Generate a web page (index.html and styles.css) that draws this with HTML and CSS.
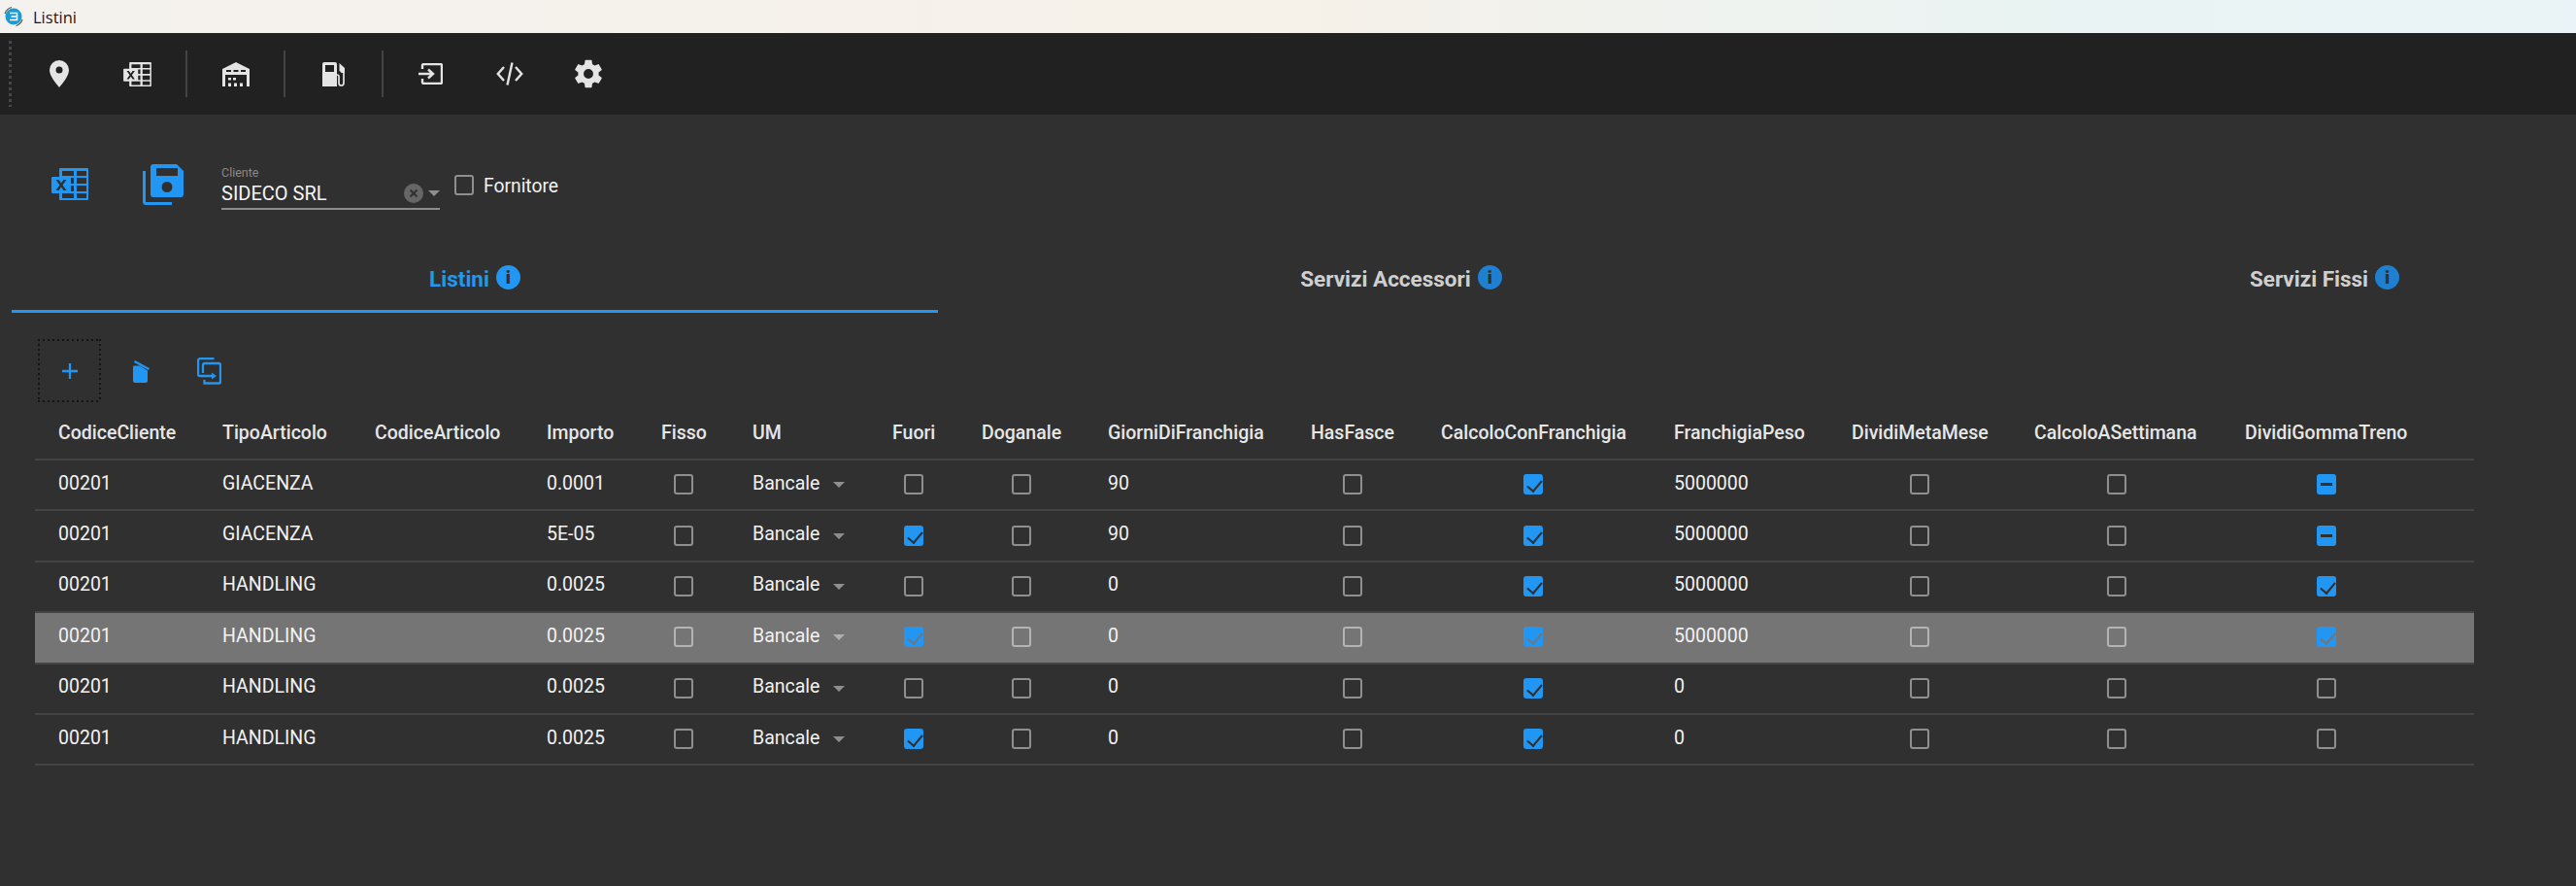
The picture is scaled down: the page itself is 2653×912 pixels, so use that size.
FILE: index.html
```html
<!DOCTYPE html>
<html lang="it">
<head>
<meta charset="utf-8">
<title>Listini</title>
<link rel="stylesheet" href="styles.css">
</head>
<body>
<svg class="defs" width="0" height="0" aria-hidden="true">
  <symbol id="xl" viewBox="0 0 38 33">
    <path fill-rule="evenodd" d="M9 0H37a1 1 0 0 1 1 1V32a1 1 0 0 1-1 1H9a1 1 0 0 1-1-1V26H1a1 1 0 0 1-1-1V10a1 1 0 0 1 1-1H8V1a1 1 0 0 1 1-1zM11 3v5h12V3zM26 3v5h10V3zM26 10v6h10v-6zM26 18v6h10v-6zM26 26v5h10v-5zM11 26v5h12v-5zM20 10v6h3v-6zM20 18v6h3v-6zM4.500 12l4 5.500-4 5.500h3l2.500-3.500 2.500 3.500h3l-4-5.500 4-5.500h-3l-2.500 3.500-2.500-3.500z"/>
  </symbol>
</svg>
<header class="titlebar">
  <svg class="applogo" viewBox="0 0 24 24"><circle cx="12" cy="12" r="8.500" fill="#1b9ad6"/><path d="M8 8.500h7.500v7H8M9.500 12h6" fill="none" stroke="#fff" stroke-width="1.600"/><path d="M3 9a10 10 0 0 1 7-6.500M21 15a10 10 0 0 1-6.500 6.500" fill="none" stroke="#555" stroke-width="1.200"/></svg>
  <span>Listini</span>
</header>
<nav class="toolbar">
  <div class="grip"></div>
  <button class="tool"><svg viewBox="0 0 20 28" width="20" height="28"><path fill-rule="evenodd" d="M10 0a10 10 0 0 1 10 10c0 6-6 13-10 18C6 23 0 16 0 10A10 10 0 0 1 10 0zm0 6.500a3.500 3.500 0 1 0 0 7 3.500 3.500 0 0 0 0-7z"/></svg></button>
  <button class="tool"><svg width="29" height="25"><use href="#xl"/></svg></button>
  <i class="sep"></i>
  <button class="tool"><svg viewBox="0 0 28 25" width="28" height="25"><path fill-rule="evenodd" d="M14 0L28 7V25H25V13H3V25H0V7zM4 8v2h5V8zM11.500 8v2h5V8zM19 8v2h5V8zM6 16h3v2.500H6zM11 16h3v2.500h-3zM6 21.500h3V25H6zM12 21.500h3V25h-3zM18 21.500h3V25h-3z"/></svg></button>
  <i class="sep"></i>
  <button class="tool"><svg viewBox="0 0 24 25" width="24" height="25"><path fill-rule="evenodd" d="M2 0h11a2 2 0 0 1 2 2v23H0V2a2 2 0 0 1 2-2zm1 3v7h9V3z"/><path class="thin" d="M15 13a2 2 0 0 1 2 2v6.500a2.500 2.500 0 0 0 5 0V8"/><path d="M17.500 1l5.500 5v5h-3.500l-2-2.500z"/></svg></button>
  <i class="sep sep-tight"></i>
  <button class="tool"><svg viewBox="0 0 25 22" width="25" height="22"><path class="ln" d="M4 6V2.500A1.500 1.500 0 0 1 5.500 1h17A1.500 1.500 0 0 1 24 2.500v17a1.500 1.500 0 0 1-1.500 1.500h-17A1.500 1.500 0 0 1 4 19.500V16M0 11h14M10 6.500l5 4.500-5 4.500"/></svg></button>
  <button class="tool"><svg viewBox="0 0 28 24" width="28" height="24"><path class="ln" d="M8 5L1.800 12 8 19M20 5l6.200 7L20 19M16.500.500l-5 23"/></svg></button>
  <button class="tool"><svg viewBox="0 0 24 24" width="34" height="34"><path fill-rule="evenodd" d="M19.430 12.980c.04-.32.07-.64.07-.98s-.03-.66-.07-.98l2.110-1.650c.19-.15.24-.42.12-.64l-2-3.460c-.12-.22-.39-.3-.61-.22l-2.490 1c-.52-.4-1.080-.73-1.690-.98l-.38-2.650A.49.490 0 0 0 14 2h-4c-.25 0-.46.180-.49.420l-.38 2.650c-.61.250-1.170.59-1.690.98l-2.490-1a.49.490 0 0 0-.61.220l-2 3.460c-.13.220-.07.490.12.640l2.110 1.650c-.04.320-.07.650-.07.980s.03.660.07.980l-2.110 1.650c-.19.150-.24.420-.12.640l2 3.460c.12.220.39.300.61.220l2.490-1c.52.400 1.080.730 1.690.980l.38 2.650c.03.240.24.420.49.420h4c.25 0 .46-.180.49-.420l.38-2.650c.61-.250 1.170-.590 1.690-.980l2.490 1c.23.090.49 0 .61-.220l2-3.460c.12-.220.07-.490-.12-.640zM12 15.500a3.500 3.500 0 1 1 0-7 3.500 3.500 0 0 1 0 7z"/></svg></button>
</nav>
<main class="content">
  <section class="filters">
    <button class="big b-xl"><svg width="38" height="33"><use href="#xl"/></svg></button>
    <button class="big b-save"><svg viewBox="0 0 42 42" width="42" height="42"><path fill-rule="evenodd" d="M11 0h24l7 7v24a3 3 0 0 1-3 3H11a3 3 0 0 1-3-3V3a3 3 0 0 1 3-3zm3 4v8h22V4zm11 14a5.500 5.500 0 1 0 0 11 5.500 5.500 0 0 0 0-11z"/><path class="ln" d="M1.500 7v31.500a2 2 0 0 0 2 2H30"/></svg></button>
    <div class="combo">
      <label>Cliente</label>
      <div class="combo-row">
        <span class="combo-value">SIDECO SRL</span>
        <svg class="clear" viewBox="0 0 20 20" width="20" height="20"><circle cx="10" cy="10" r="10" fill="#666"/><path d="M6.500 6.500l7 7M13.500 6.500l-7 7" stroke="#303030" stroke-width="2"/></svg>
        <i class="caret"></i>
      </div>
    </div>
    <label class="check-label"><i class="cb"></i><span>Fornitore</span></label>
  </section>
  <section class="tabs">
    <div class="tab active">Listini <i class="info">i</i></div>
    <div class="tab">Servizi Accessori <i class="info">i</i></div>
    <div class="tab">Servizi Fissi <i class="info">i</i></div>
  </section>
  <section class="actions">
    <button class="act add"><svg viewBox="0 0 16 16" width="16" height="16"><path class="ln" d="M8 0v16M0 8h16"/></svg></button>
    <button class="act del"><svg viewBox="0 0 18 24" width="18" height="24"><path d="M2 6.500h6l8 5V22a2 2 0 0 1-2 2H3a2 2 0 0 1-2-2V7.500a1 1 0 0 1 1-1z"/><path class="ln" d="M2.500 2l15 8"/></svg></button>
    <button class="act copy"><svg viewBox="0 0 25 28" width="25" height="28"><path class="ln" d="M17.500 1.200H3a2 2 0 0 0-2 2V17a2 2 0 0 0 2 2h12M6 16V8a2 2 0 0 1 2-2h14.500A1.500 1.500 0 0 1 24 7.500V25.500a1 1 0 0 1-1 1H7.500V23"/><path d="M15 15.500l5 3.500-5 3.500z"/></svg></button>
  </section>
  <table class="grid">
    <colgroup>
      <col class="c1"><col class="c2"><col class="c3"><col class="c4"><col class="c5"><col class="c6"><col class="c7"><col class="c8"><col class="c9"><col class="c10"><col class="c11"><col class="c12"><col class="c13"><col class="c14"><col class="c15">
    </colgroup>
    <thead>
      <tr><th>CodiceCliente</th><th>TipoArticolo</th><th>CodiceArticolo</th><th>Importo</th><th>Fisso</th><th>UM</th><th>Fuori</th><th>Doganale</th><th>GiorniDiFranchigia</th><th>HasFasce</th><th>CalcoloConFranchigia</th><th>FranchigiaPeso</th><th>DividiMetaMese</th><th>CalcoloASettimana</th><th>DividiGommaTreno</th></tr>
    </thead>
    <tbody>
      <tr><td>00201</td><td>GIACENZA</td><td></td><td>0.0001</td><td><span class="cbwrap w-fisso"><i class="cb"></i></span></td><td><span class="um">Bancale<i class="caret"></i></span></td><td><span class="cbwrap w-fuori"><i class="cb"></i></span></td><td><span class="cbwrap w-dog"><i class="cb"></i></span></td><td>90</td><td><span class="cbwrap w-has"><i class="cb"></i></span></td><td><span class="cbwrap w-ccf"><i class="cb on"></i></span></td><td>5000000</td><td><span class="cbwrap w-dmm"><i class="cb"></i></span></td><td><span class="cbwrap w-cas"><i class="cb"></i></span></td><td><span class="cbwrap w-dgt"><i class="cb mixed"></i></span></td></tr>
      <tr><td>00201</td><td>GIACENZA</td><td></td><td>5E-05</td><td><span class="cbwrap w-fisso"><i class="cb"></i></span></td><td><span class="um">Bancale<i class="caret"></i></span></td><td><span class="cbwrap w-fuori"><i class="cb on"></i></span></td><td><span class="cbwrap w-dog"><i class="cb"></i></span></td><td>90</td><td><span class="cbwrap w-has"><i class="cb"></i></span></td><td><span class="cbwrap w-ccf"><i class="cb on"></i></span></td><td>5000000</td><td><span class="cbwrap w-dmm"><i class="cb"></i></span></td><td><span class="cbwrap w-cas"><i class="cb"></i></span></td><td><span class="cbwrap w-dgt"><i class="cb mixed"></i></span></td></tr>
      <tr><td>00201</td><td>HANDLING</td><td></td><td>0.0025</td><td><span class="cbwrap w-fisso"><i class="cb"></i></span></td><td><span class="um">Bancale<i class="caret"></i></span></td><td><span class="cbwrap w-fuori"><i class="cb"></i></span></td><td><span class="cbwrap w-dog"><i class="cb"></i></span></td><td>0</td><td><span class="cbwrap w-has"><i class="cb"></i></span></td><td><span class="cbwrap w-ccf"><i class="cb on"></i></span></td><td>5000000</td><td><span class="cbwrap w-dmm"><i class="cb"></i></span></td><td><span class="cbwrap w-cas"><i class="cb"></i></span></td><td><span class="cbwrap w-dgt"><i class="cb on"></i></span></td></tr>
      <tr class="selected"><td>00201</td><td>HANDLING</td><td></td><td>0.0025</td><td><span class="cbwrap w-fisso"><i class="cb"></i></span></td><td><span class="um">Bancale<i class="caret"></i></span></td><td><span class="cbwrap w-fuori"><i class="cb on"></i></span></td><td><span class="cbwrap w-dog"><i class="cb"></i></span></td><td>0</td><td><span class="cbwrap w-has"><i class="cb"></i></span></td><td><span class="cbwrap w-ccf"><i class="cb on"></i></span></td><td>5000000</td><td><span class="cbwrap w-dmm"><i class="cb"></i></span></td><td><span class="cbwrap w-cas"><i class="cb"></i></span></td><td><span class="cbwrap w-dgt"><i class="cb on"></i></span></td></tr>
      <tr><td>00201</td><td>HANDLING</td><td></td><td>0.0025</td><td><span class="cbwrap w-fisso"><i class="cb"></i></span></td><td><span class="um">Bancale<i class="caret"></i></span></td><td><span class="cbwrap w-fuori"><i class="cb"></i></span></td><td><span class="cbwrap w-dog"><i class="cb"></i></span></td><td>0</td><td><span class="cbwrap w-has"><i class="cb"></i></span></td><td><span class="cbwrap w-ccf"><i class="cb on"></i></span></td><td>0</td><td><span class="cbwrap w-dmm"><i class="cb"></i></span></td><td><span class="cbwrap w-cas"><i class="cb"></i></span></td><td><span class="cbwrap w-dgt"><i class="cb"></i></span></td></tr>
      <tr><td>00201</td><td>HANDLING</td><td></td><td>0.0025</td><td><span class="cbwrap w-fisso"><i class="cb"></i></span></td><td><span class="um">Bancale<i class="caret"></i></span></td><td><span class="cbwrap w-fuori"><i class="cb on"></i></span></td><td><span class="cbwrap w-dog"><i class="cb"></i></span></td><td>0</td><td><span class="cbwrap w-has"><i class="cb"></i></span></td><td><span class="cbwrap w-ccf"><i class="cb on"></i></span></td><td>0</td><td><span class="cbwrap w-dmm"><i class="cb"></i></span></td><td><span class="cbwrap w-cas"><i class="cb"></i></span></td><td><span class="cbwrap w-dgt"><i class="cb"></i></span></td></tr>
    </tbody>
  </table>
</main>
</body>
</html>
```
FILE: styles.css
```css
* { box-sizing: border-box; }
html, body { margin: 0; height: 100%; }
body {
  width: 2653px;
  height: 912px;
  overflow: hidden;
  background: #303030;
  color: #f2f2f2;
  font-family: Roboto, "Noto Sans", sans-serif;
  font-size: 16px;
  display: flex;
  flex-direction: column;
}
.defs { position: absolute; }
button { background: none; border: 0; padding: 0; color: inherit; display: flex; align-items: center; justify-content: center; }
.ln { fill: none; stroke-width: 2.300; }
.thin { fill: none; stroke-width: 1.700; }

.titlebar {
  height: 34px;
  flex: none;
  display: flex;
  align-items: center;
  gap: 8px;
  padding-left: 2px;
  background: linear-gradient(90deg, #f4f2ee 0%, #f6f1e9 50%, #e9f3f3 80%, #eaf3f7 100%);
  color: #1a1a1a;
  font-family: "Open Sans", sans-serif;
  font-size: 16.500px;
}
.applogo { width: 24px; height: 24px; }

.toolbar {
  height: 84px;
  flex: none;
  background: #212121;
  display: flex;
  align-items: center;
  padding-left: 9px;
}
.toolbar svg { fill: #e4e4e4; stroke: #e4e4e4; stroke-width: 0; }
.toolbar .ln { stroke-width: 2.400; }
.toolbar .thin { stroke-width: 1.700; }
.grip {
  width: 3px;
  height: 68px;
  margin-right: 8px;
  background: repeating-linear-gradient(180deg, #474747 0 3px, transparent 3px 6px);
}
.tool { width: 81px; height: 48px; flex: none; }
.sep { width: 2px; height: 48px; margin: 0 9px; background: #444; flex: none; }
.sep-tight { margin-right: 8px; }

.content { flex: 1; display: flex; flex-direction: column; }

.filters {
  height: 112px;
  display: flex;
  align-items: flex-start;
  padding-top: 51px;
}
.big svg { fill: #2196f3; stroke: #2196f3; stroke-width: 0; }
.big .ln { stroke-width: 3; }
.b-xl { margin: 4px 0 0 53px; }
.b-save { margin-left: 56px; }
.combo { width: 225px; margin-left: 39px; height: 47px; border-bottom: 2px solid #8c8c8c; }
.combo label { display: block; font-size: 12.500px; line-height: 14px; color: #8a8a8a; margin-top: 2px; }
.combo-row { display: flex; align-items: center; height: 27px; }
.combo-value { flex: 1; font-size: 20px; color: #f5f5f5; }
.clear { margin-right: 5px; }
.caret {
  display: inline-block;
  width: 0; height: 0;
  border-left: 6px solid transparent;
  border-right: 6px solid transparent;
  border-top: 6px solid #8e8e8e;
}
.check-label { display: flex; align-items: center; gap: 10px; margin: 11px 0 0 15px; font-size: 19.300px; color: #f2f2f2; }
.check-label .cb { margin-top: -2px; }

.cb {
  display: block;
  flex: none;
  width: 20px;
  height: 21px;
  border: 2px solid #8f8f8f;
  border-radius: 3px;
}
.cb.on, .cb.mixed { background: #2196f3; border-color: #2196f3; position: relative; }
.cb.on::after {
  content: "";
  position: absolute;
  left: 5px; top: 1px;
  width: 7px; height: 13px;
  border: solid #303030;
  border-width: 0 2px 2px 0;
  transform: rotate(40deg);
}
.cb.mixed::after {
  content: "";
  position: absolute;
  left: 2px; top: 7px;
  width: 12px; height: 3px;
  background: #303030;
}

.tabs { display: flex; height: 58px; margin-left: 12px; margin-top: 34px; }
.tab {
  flex: none;
  width: 954px;
  padding-top: 10px;
  height: 58px;
  display: flex;
  align-items: flex-start;
  justify-content: center;
  gap: 7px;
  font-size: 22.500px;
  font-weight: 700;
  line-height: 26px;
  color: #cfcfcf;
}
.tab:last-child { flex: 1; width: auto; padding-left: 215px; }
.tab.active { color: #2196f3; border-bottom: 3px solid #2196f3; }
.info {
  display: inline-flex;
  width: 25px;
  height: 25px;
  margin-top: -1px;
  border-radius: 50%;
  align-items: center;
  justify-content: center;
  background: #1f7fd0;
  color: #303030;
  font-style: normal;
  font-size: 19px;
  font-weight: 900;
}
.tab.active .info { background: #2196f3; }

.actions { display: flex; margin: 27px 0 0 39px; height: 65px; align-items: center; }
.actions svg { fill: #2196f3; stroke: #2196f3; stroke-width: 0; }
.act.add {
  width: 65px;
  height: 65px;
  background:
    repeating-linear-gradient(90deg, #141414 0 2px, transparent 2px 5px) top / 100% 2px no-repeat,
    repeating-linear-gradient(90deg, #141414 0 2px, transparent 2px 5px) bottom / 100% 2px no-repeat,
    repeating-linear-gradient(180deg, #141414 0 2px, transparent 2px 5px) left / 2px 100% no-repeat,
    repeating-linear-gradient(180deg, #141414 0 2px, transparent 2px 5px) right / 2px 100% no-repeat;
}
.act.del { margin-left: 32px; }
.act.copy { margin-left: 49px; }

.grid {
  margin: 7px 0 0 36px;
  width: 2512px;
  table-layout: fixed;
  border-collapse: collapse;
}
.c1 { width: 169px; } .c2 { width: 157px; } .c3 { width: 177px; } .c4 { width: 118px; }
.c5 { width: 94px; } .c6 { width: 144px; } .c7 { width: 92px; } .c8 { width: 130px; }
.c9 { width: 209px; } .c10 { width: 134px; } .c11 { width: 240px; } .c12 { width: 183px; }
.c13 { width: 188px; } .c14 { width: 217px; } .c15 { width: 260px; }
.grid th, .grid td { padding: 0 0 0 24px; text-align: left; white-space: nowrap; overflow: hidden; }
.grid th { height: 52px; font-weight: 500; font-size: 19.500px; color: #e6e6e6; vertical-align: middle; padding-bottom: 2px; }
.grid thead tr { border-bottom: 2px solid #444; }
.grid td { height: 52.400px; font-size: 19.500px; color: #f2f2f2; padding-bottom: 4px; }
.grid tbody tr { border-bottom: 2px solid #444; }
.grid tr.selected { background: #757575; }
.grid tr.selected .cb { border-color: #b4b4b4; }
.grid tr.selected .cb.on { border-color: #2196f3; }
.grid tr.selected .cb.on::after { border-color: #757575; }
.grid tr.selected .caret { border-top-color: #b0b0b0; }

.cbwrap { display: flex; justify-content: center; padding-top: 3px; }
.w-fisso { width: 46px; } .w-fuori { width: 44px; } .w-dog { width: 82px; }
.w-has { width: 86px; } .w-ccf { width: 190px; } .w-dmm { width: 140px; }
.w-cas { width: 169px; } .w-dgt { width: 167px; }
.um { display: flex; align-items: center; gap: 14px; }
.um .caret { margin-top: 4px; }
```
